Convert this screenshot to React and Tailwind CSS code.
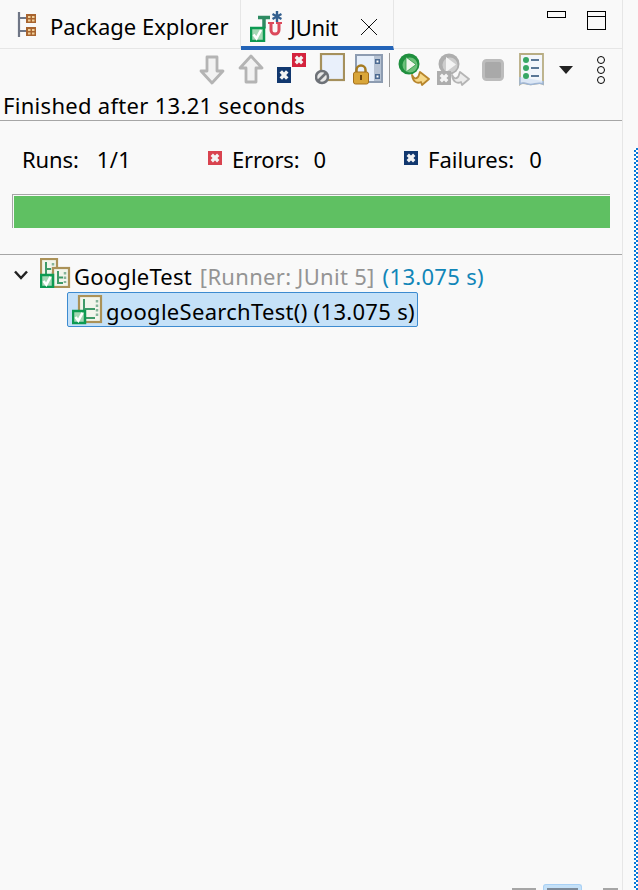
const CheckBadge = ({ x, y, s = 14 }) => (
  <g>
    <rect x={x + 1} y={y + 1} width={s - 2} height={s - 2} fill="#a5d8b5" stroke="#0d9a52" strokeWidth="2.500" />
    <path d={`M${x + 3.5} ${y + s * 0.5}l${s * 0.2} ${s * 0.26}l${s * 0.3} -${s * 0.56}`} fill="none" stroke="#ffffff" strokeWidth="2.500" />
  </g>
)

const SuiteBox = ({ x, y, w, h }) => (
  <g>
    <rect x={x + 1} y={y + 1} width={w - 2} height={h - 2} fill="#f2f5ec" stroke="#ab9258" strokeWidth="2.200" />
    <path d={`M${x + 6} ${y + 4}v${h - 9}h${w - 13}M${x + 6} ${y + h / 2}h${w - 13}`} fill="none" stroke="#3f9a68" strokeWidth="2" />
    <path d={`M${x + w - 5} ${y + 5}v${h - 10}`} stroke="#86b59a" strokeWidth="2.500" strokeDasharray="2.500 2" />
  </g>
)

const PackageIcon = () => (
  <svg width="22" height="25" viewBox="0 0 22 25">
    <path d="M2 0v25M2 6h7M2 19h7" stroke="#6f7686" strokeWidth="2.200" fill="none" />
    <rect x="9" y="2" width="10" height="9" fill="#a8642f" />
    <rect x="9" y="15" width="10" height="9" fill="#a8642f" />
    <path d="M11 5h2.500M15 5h2.500M11 8.500h2.500M15 8.500h2.500M11 18h2.500M15 18h2.500M11 21.500h2.500M15 21.500h2.500" stroke="#f0cf98" strokeWidth="2" />
  </svg>
)

const JunitIcon = () => (
  <svg className="mt-[7px]" width="32" height="31" viewBox="0 0 32 31">
    <path d="M8 6.500h12M14 6.500v11" stroke="#2e8b62" strokeWidth="3.500" fill="none" />
    <path d="M21 13v6a4 4 0 0 0 8 0v-6" stroke="#dc4a5c" strokeWidth="3" fill="none" />
    <path d="M18 12h6M26 12h6" stroke="#dc4a5c" strokeWidth="2" />
    <path d="M27 0v11M22.500 3l9 5M31.500 3l-9 5" stroke="#34608f" strokeWidth="2.400" />
    <CheckBadge x={0} y={16} s={15} />
  </svg>
)

const ArrowIcon = ({ up }) => (
  <svg width="26" height="31" viewBox="0 0 26 31">
    <path
      d={up ? 'M13 2L24 14H18V28H8V14H2Z' : 'M13 29L24 17H18V3H8V17H2Z'}
      fill="#f2f2f2"
      stroke="#b4b4b4"
      strokeWidth="2.800"
      strokeLinejoin="round"
    />
  </svg>
)

const XBox = ({ x, y, s, h, fill }) => {
  const t = h || s
  return (
    <g>
      <rect x={x} y={y} width={s} height={t} fill={fill} />
      <path
        d={`M${x + s * 0.27} ${y + t * 0.27}L${x + s * 0.73} ${y + t * 0.73}M${x + s * 0.73} ${y + t * 0.27}L${x + s * 0.27} ${y + t * 0.73}`}
        stroke="#f4f4f4"
        strokeWidth={s * 0.24}
      />
    </g>
  )
}

const SmallX = ({ fill }) => (
  <svg width="14" height="14" viewBox="0 0 14 14">
    <XBox x={0} y={0} s={14} fill={fill} />
  </svg>
)

const NextFailIcon = () => (
  <svg width="30" height="33" viewBox="0 0 30 33">
    <XBox x={16} y={0} s={14} fill="#d4233d" />
    <XBox x={1} y={14} s={14} h={16} fill="#12386f" />
  </svg>
)

const ScrollLockIcon = () => (
  <svg width="30" height="33" viewBox="0 0 30 33">
    <rect x="6" y="1" width="23" height="26" fill="#e9f0fb" stroke="#a5905c" strokeWidth="2.200" />
    <circle cx="7" cy="24" r="6" fill="#e8e8e8" stroke="#6e7278" strokeWidth="2.500" />
    <path d="M3 28l8 -8" stroke="#6e7278" strokeWidth="2.500" />
  </svg>
)

const LockIcon = () => (
  <svg width="30" height="33" viewBox="0 0 30 33">
    <rect x="3" y="2" width="26" height="27" fill="#e6effa" stroke="#8d9cb1" strokeWidth="2" />
    <rect x="21" y="3" width="7" height="25" fill="#b6c2d2" />
    <rect x="22" y="6" width="5" height="5" fill="#4b6a91" />
    <rect x="23.500" y="7.500" width="2" height="2" fill="#fff" />
    <rect x="22" y="21" width="5" height="5" fill="#4b6a91" />
    <rect x="23.500" y="22.500" width="2" height="2" fill="#fff" />
    <path d="M3.500 20v-3a4.500 4.500 0 0 1 9 0v3" fill="none" stroke="#a57b20" strokeWidth="2.500" />
    <rect x="0.500" y="19" width="15" height="12" rx="2" fill="#d9a63a" stroke="#a5701c" />
    <rect x="7" y="22" width="2" height="5" fill="#6b4510" />
  </svg>
)

const RelaunchIcon = () => (
  <svg width="33" height="33" viewBox="0 0 33 33">
    <circle cx="11" cy="11" r="10.500" fill="#1f8f3e" />
    <circle cx="12" cy="12" r="7.500" fill="#6cc07a" />
    <path d="M8 4l10 7.500l-10 7.500Z" fill="#f0f6ec" stroke="#2f9a46" strokeWidth="0.800" />
    <path d="M14 22c2 4 4 4 6 2c1 -1 1 -3 2 -5l9 7l-7 6l-1 -3c-4 2 -8 0 -9 -7Z" fill="#f6d888" stroke="#b8862d" strokeWidth="1.800" strokeLinejoin="round" />
  </svg>
)

const RelaunchFailedIcon = () => (
  <svg width="33" height="33" viewBox="0 0 33 33">
    <circle cx="12" cy="11" r="10.500" fill="#aeaeae" />
    <circle cx="13" cy="12" r="7.500" fill="#cdcdcd" />
    <path d="M9 4l10 7.500l-10 7.500Z" fill="#f4f4f4" />
    <path d="M15 22c2 4 4 4 6 2c1 -1 1 -3 2 -5l9 7l-7 6l-1 -3c-4 2 -8 0 -9 -7Z" fill="#ececec" stroke="#b5b5b5" strokeWidth="1.800" strokeLinejoin="round" />
    <XBox x={0} y={18} s={14} fill="#adadad" />
  </svg>
)

const StopIcon = () => (
  <svg width="22" height="22" viewBox="0 0 22 22">
    <rect x="1.500" y="1.500" width="19" height="19" rx="3" fill="#a9a9a9" stroke="#bcbcbc" strokeWidth="3" />
  </svg>
)

const HistoryIcon = () => (
  <svg width="25" height="33" viewBox="0 0 25 33">
    <path d="M1 1H24V31C19 28 14 33 9 31C6 30 3 29 1 31Z" fill="#f3f6fb" stroke="#b8ad83" strokeWidth="1.800" />
    <path d="M1 24v7c3 -2 5 -1 8 0c5 2 10 -3 15 0v-3" fill="#dce7f5" stroke="#9fb6d6" strokeWidth="1.500" />
    <circle cx="7" cy="7" r="3" fill="#37a765" />
    <circle cx="7" cy="15" r="3" fill="#37a765" />
    <circle cx="7" cy="23" r="3" fill="#37a765" />
    <path d="M12 7h8M12 15h8M12 23h8" stroke="#5a7796" strokeWidth="2" />
  </svg>
)

const SuiteIcon = () => (
  <svg className="mb-[4px]" width="31" height="30" viewBox="0 0 31 30">
    <SuiteBox x={0} y={0} w={18} h={22} />
    <SuiteBox x={12} y={9} w={18} h={21} />
    <CheckBadge x={0} y={16} s={14} />
  </svg>
)

const MethodIcon = () => (
  <svg width="31" height="30" viewBox="0 0 31 30">
    <SuiteBox x={6} y={0} w={24} h={28} />
    <CheckBadge x={0} y={15} s={14} />
  </svg>
)

const Counter = ({ icon, label, value, className, labelClass, valueClass }) => (
  <div className={`flex items-center ${className}`}>
    {icon}
    <span className={labelClass}>{label}</span>
    <span className={valueClass}>{value}</span>
  </div>
)

export default function App() {
  return (
    <div className="flex h-[890px] w-[638px] overflow-hidden bg-[#f9f9f9] text-[22px] leading-[30px] tracking-[0.3px] text-black" style={{ fontFamily: '"Noto Sans", sans-serif' }}>
      <div className="flex w-[623px] flex-col border-r border-[#e6e6e6]">
        {/* tab bar */}
        <div className="flex h-[49px] shrink-0 items-start border-b border-[#e6e6e6]">
          <div className="flex h-[48px] w-[241px] items-center border-r border-[#e6e6e6] pl-[17px]">
            <PackageIcon />
            <span className="ml-[11px] pt-[4px] tracking-normal">Package Explorer</span>
          </div>
          <div className="flex h-[50px] w-[153px] items-center border-r border-[#e6e6e6] border-b-[4px] border-b-[#2364b8] pl-[9px]">
            <JunitIcon />
            <span className="ml-[8px] pt-[7px] -tracking-[0.3px]">JUnit</span>
            <svg className="ml-[22px] mt-[7px]" width="18" height="18" viewBox="0 0 18 18">
              <path d="M1 1L17 17M17 1L1 17" stroke="#111" strokeWidth="1" />
            </svg>
          </div>
          <div className="ml-[153px] flex items-start gap-[21px] pt-[11px]">
            <div className="h-[7px] w-[19px] border border-black" />
            <div className="h-[19px] w-[19px] border border-black">
              <div className="h-[5px] border-b border-black" />
            </div>
          </div>
        </div>

        {/* toolbar */}
        <div className="flex h-[41px] shrink-0 items-center pl-[199px]">
          <ArrowIcon />
          <div className="ml-[13px]"><ArrowIcon up /></div>
          <div className="ml-[12px]"><NextFailIcon /></div>
          <div className="ml-[9px]"><ScrollLockIcon /></div>
          <div className="ml-[8px]"><LockIcon /></div>
          <div className="ml-[6px] h-[34px] w-px bg-[#9a9a9a]" />
          <div className="ml-[8px]"><RelaunchIcon /></div>
          <div className="ml-[6px]"><RelaunchFailedIcon /></div>
          <div className="ml-[12px]"><StopIcon /></div>
          <div className="ml-[15px]"><HistoryIcon /></div>
          <svg className="ml-[15px]" width="14" height="8" viewBox="0 0 14 8"><path d="M0 0H14L7 8Z" fill="#222" /></svg>
          <div className="ml-[24px] flex flex-col gap-[2px]">
            <div className="h-[8px] w-[8px] rounded-full border border-black" />
            <div className="h-[8px] w-[8px] rounded-full border border-black" />
            <div className="h-[8px] w-[8px] rounded-full border border-black" />
          </div>
        </div>

        {/* status */}
        <div className="h-[31px] shrink-0 border-b border-[#a6a6a6] pl-[3px]">
          Finished after 13.21 seconds
        </div>

        {/* counters */}
        <div className="flex h-[73px] shrink-0 items-center pl-[22px] pt-[3px]">
          <Counter className="w-[186px]" labelClass="-tracking-[0.1px]" valueClass="ml-[18px]" label="Runs:" value="1/1" />
          <Counter
            className="w-[196px]"
            icon={<span className="mr-[10px] mb-[3px] flex"><SmallX fill="#d9434f" /></span>}
            labelClass="-tracking-[0.2px]"
            valueClass="ml-[14px]"
            label="Errors:"
            value="0"
          />
          <Counter
            icon={<span className="mr-[10px] mb-[3px] flex"><SmallX fill="#12386f" /></span>}
            labelClass="tracking-normal"
            valueClass="ml-[15px]"
            label="Failures:"
            value="0"
          />
        </div>

        {/* progress bar */}
        <div className="ml-[12px] h-[34px] w-[598px] shrink-0 border-l border-t border-[#a6a6a6] pl-px pt-px">
          <div className="h-full bg-[#5fc062]" />
        </div>

        {/* results tree */}
        <div className="mt-[26px] flex min-h-0 flex-1 flex-col border-t border-[#a6a6a6] pt-[3px]">
          <div className="flex h-[34px] items-center pl-[13px]">
            <svg width="16" height="10" viewBox="0 0 16 10"><path d="M2 1.500L8 8L14 1.500" fill="none" stroke="#222" strokeWidth="2.500" /></svg>
            <div className="ml-[11px] flex"><SuiteIcon /></div>
            <span className="ml-[3px] pt-px tracking-[0.2px]">GoogleTest</span>
            <span className="ml-[8px] pt-px text-[#949494]">[Runner: JUnit 5]</span>
            <span className="ml-[8px] pt-px text-[#1186b8]">(13.075 s)</span>
          </div>
          <div className="ml-[67px] flex h-[35px] w-[351px] items-center rounded-[2px] border border-[#3d8bd0] bg-[#c5e1f8] pl-[4px]">
            <MethodIcon />
            <span className="ml-[3px] whitespace-nowrap pt-[3px]">googleSearchTest() (13.075 s)</span>
          </div>

          {/* bottom trim */}
          <div className="mt-auto flex items-end pl-[512px]">
            <div className="h-[2px] w-[24px] bg-[#a6a6a6]" />
            <div className="ml-[7px] h-[6px] w-[39px] rounded-t-[3px] border border-b-0 border-[#a9d1f5] bg-[#c5e1f8] px-[3px] pt-[3px]">
              <div className="h-[3px] bg-[#7d8a99]" />
            </div>
            <div className="ml-[21px] h-[2px] w-[15px] bg-[#a6a6a6]" />
          </div>
        </div>
      </div>

      {/* sash and neighbouring view */}
      <div className="flex w-[15px] shrink-0 justify-end pt-[148px]">
        <div className="h-full w-[4px] bg-[repeating-conic-gradient(#0a78d8_0_25%,#ffffff_0_50%)] bg-[length:4px_4px]" />
      </div>
    </div>
  )
}
